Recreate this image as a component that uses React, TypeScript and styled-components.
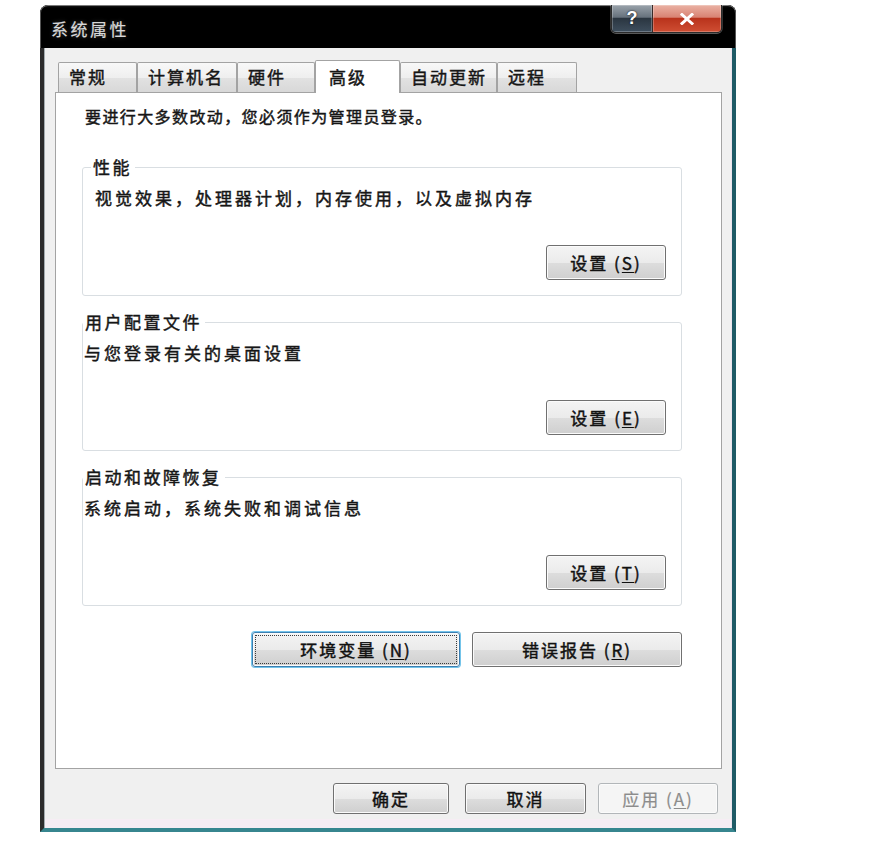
import React from "react";
import styled, { createGlobalStyle, css } from "styled-components";

const GlobalStyle = createGlobalStyle`
  html, body { margin: 0; padding: 0; background: #ffffff; }
  body {
    font-family: "Noto Sans CJK SC", "Noto Sans", "Liberation Sans", sans-serif;
    color: #161616;
    -webkit-text-stroke: 0.45px currentColor;
  }
  * { box-sizing: border-box; }
`;

const Page = styled.div`
  padding: 5px 0 0 40px;
`;

const Window = styled.div`
  width: 696px;
  display: flex;
  flex-direction: column;
  border-radius: 8px 8px 0 0;
  overflow: hidden;
  background: #000;
`;

const TitleBar = styled.div`
  height: 43px;
  display: flex;
  align-items: flex-start;
  justify-content: space-between;
  background: linear-gradient(#1c1c1c 0px, #000 3px, #000 100%);
  box-shadow: inset 0 1px 0 #7a7a7a, inset 1px 0 0 #555, inset -1px 0 0 #555;
  border-radius: 8px 8px 0 0;
`;

const Title = styled.div`
  margin: 13px 0 0 11px;
  font-size: 17px;
  line-height: 22px;
  letter-spacing: 2.5px;
  color: #d8d8d8;
  -webkit-text-stroke: 0.2px currentColor;
  text-shadow: 0 0 4px rgba(255, 255, 255, 0.25);
`;

const Caption = styled.div`
  display: flex;
  height: 28px;
  margin-right: 14px;
  border: 1px solid #2b2b2b;
  border-top: none;
  border-radius: 0 0 5px 5px;
  overflow: hidden;
  box-shadow: 0 1px 0 rgba(255, 255, 255, 0.35), 1px 0 0 rgba(255, 255, 255, 0.2),
    -1px 0 0 rgba(255, 255, 255, 0.2);
`;

const CaptionButton = styled.div<{ $w: number; $close?: boolean }>`
  width: ${(p) => p.$w}px;
  display: flex;
  align-items: center;
  justify-content: center;
  color: #fff;
  font-family: "Liberation Sans", sans-serif;
  font-weight: bold;
  font-size: 18px;
  -webkit-text-stroke: 0;
  text-shadow: 0 0 2px #000;
  background: linear-gradient(#9aa3ab 0%, #67727d 45%, #2b3641 50%, #3e4e5d 100%);
  box-shadow: inset 0 0 0 1px rgba(255, 255, 255, 0.25);
  ${(p) =>
    p.$close &&
    css`
      background: linear-gradient(#eab2a4 0%, #d98373 45%, #b9331c 50%, #cf4e33 100%);
      border-left: 1px solid #3a2a28;
    `}
`;

const ClientFrame = styled.div`
  display: flex;
  flex-direction: column;
  height: 784px;
  padding: 12px 10px 14px 11px;
  border-left: 4px solid #2c2c2c;
  border-right: 4px solid #1f5b66;
  border-bottom: 4px solid #37868f;
  background: linear-gradient(#f0f0f0 calc(100% - 9px), #f6edf4 calc(100% - 9px));
  box-shadow: inset 1px 0 0 #a4acb0, inset -1px 0 0 #ece3ee;
`;

const TabStrip = styled.div`
  display: flex;
  align-items: flex-end;
  height: 32px;
  padding-left: 3px;
`;

const Tab = styled.div<{ $w: number; $active?: boolean }>`
  width: ${(p) => p.$w}px;
  height: 30px;
  padding-left: 10px;
  border: 1px solid #a3a3a3;
  border-bottom: none;
  border-radius: 2px 2px 0 0;
  background: linear-gradient(#f8f8f8 0%, #efefef 50%, #e2e2e2 51%, #d8d8d8 100%);
  font-size: 17px;
  line-height: 28px;
  letter-spacing: 2px;
  white-space: nowrap;
  ${(p) =>
    p.$active &&
    css`
      position: relative;
      z-index: 1;
      height: 33px;
      margin-bottom: -1px;
      padding: 2px 0 0 13px;
      background: #ffffff;
    `}
`;

const Panel = styled.div`
  height: 677px;
  display: flex;
  flex-direction: column;
  padding: 13px 39px 0 26px;
  border: 1px solid #a3a3a3;
  background: #ffffff;
`;

const Notice = styled.div`
  margin-left: 3px;
  font-size: 16px;
  line-height: 20px;
  letter-spacing: 1.4px;
`;

const Group = styled.fieldset<{ $first?: boolean }>`
  margin: ${(p) => (p.$first ? 31 : 16)}px 0 0 0;
  padding: 0;
  min-width: 0;
  border: 1px solid #d9dee2;
  border-radius: 3px;
`;

const GroupLabel = styled.legend<{ $indent: number }>`
  margin-left: ${(p) => p.$indent}px;
  padding: 0 3px 0 2px;
  font-size: 17px;
  line-height: 20px;
  letter-spacing: 2.5px;
`;

const GroupBody = styled.div<{ $indent: number }>`
  display: flex;
  flex-direction: column;
  padding: 11px 15px 15px ${(p) => p.$indent}px;
`;

const GroupText = styled.div`
  font-size: 17px;
  line-height: 20px;
  letter-spacing: 3px;
  white-space: nowrap;
`;

const Button = styled.div<{ $w: number; $h?: number; $focus?: boolean; $disabled?: boolean }>`
  width: ${(p) => p.$w}px;
  height: ${(p) => p.$h ?? 35}px;
  display: flex;
  align-items: center;
  justify-content: center;
  border: 1px solid #707070;
  border-radius: 3px;
  background: linear-gradient(#f4f4f4 0%, #ebebeb 50%, #dddddd 51%, #cfcfcf 100%);
  box-shadow: inset 0 0 0 1px #fbfbfb;
  font-size: 17px;
  letter-spacing: 2px;
  color: #111;
  white-space: nowrap;
  ${(p) =>
    p.$focus &&
    css`
      border-color: #3c7fb1;
      box-shadow: 0 0 0 1px #74c4ea, inset 0 0 0 1px #fbfbfb;
      outline: 1px dotted #3a3a3a;
      outline-offset: -4px;
    `}
  ${(p) =>
    p.$disabled &&
    css`
      border-color: #b2b6b9;
      background: #f5f5f5;
      color: #8c8c8c;
      -webkit-text-stroke: 0.2px currentColor;
    `}
`;

const GroupButton = styled(Button)`
  align-self: flex-end;
  margin-top: 37px;
`;

const Accel = styled.span`
  text-decoration: underline;
  text-decoration-thickness: 1px;
  text-underline-offset: 2px;
`;

const ActionRow = styled.div`
  display: flex;
  justify-content: flex-end;
  gap: 12px;
  margin-top: 26px;
`;

const FooterRow = styled.div`
  display: flex;
  justify-content: flex-end;
  margin-top: 14px;
  padding-right: 4px;
`;

const FooterButton = styled(Button)<{ $gap: number }>`
  margin-left: ${(p) => p.$gap}px;
`;

const tabs = [
  { label: "常规", w: 79 },
  { label: "计算机名", w: 100 },
  { label: "硬件", w: 78 },
  { label: "高级", w: 85, active: true },
  { label: "自动更新", w: 97 },
  { label: "远程", w: 80 },
];

const groups = [
  { title: "性能", text: "视觉效果，处理器计划，内存使用，以及虚拟内存", key: "S", labelIndent: 8, bodyIndent: 12 },
  { title: "用户配置文件", text: "与您登录有关的桌面设置", key: "E", labelIndent: 0, bodyIndent: 1 },
  { title: "启动和故障恢复", text: "系统启动，系统失败和调试信息", key: "T", labelIndent: 0, bodyIndent: 1 },
];

export default function App() {
  return (
    <Page>
      <GlobalStyle />
      <Window>
        <TitleBar>
          <Title>系统属性</Title>
          <Caption>
            <CaptionButton $w={40}>?</CaptionButton>
            <CaptionButton $w={69} $close>
              <svg width="14" height="12" viewBox="0 0 14 12">
                <path d="M2 1.5 L12 10.5 M12 1.5 L2 10.5" stroke="#fff" strokeWidth="3" strokeLinecap="square" />
              </svg>
            </CaptionButton>
          </Caption>
        </TitleBar>
        <ClientFrame>
          <TabStrip>
            {tabs.map((t) => (
              <Tab key={t.label} $w={t.w} $active={t.active}>
                {t.label}
              </Tab>
            ))}
          </TabStrip>
          <Panel>
            <Notice>要进行大多数改动，您必须作为管理员登录。</Notice>
            {groups.map((g, i) => (
              <Group key={g.title} $first={i === 0}>
                <GroupLabel $indent={g.labelIndent}>{g.title}</GroupLabel>
                <GroupBody $indent={g.bodyIndent}>
                  <GroupText>{g.text}</GroupText>
                  <GroupButton $w={120}>
                    设置 (<Accel>{g.key}</Accel>)
                  </GroupButton>
                </GroupBody>
              </Group>
            ))}
            <ActionRow>
              <Button $w={208} $focus>
                环境变量 (<Accel>N</Accel>)
              </Button>
              <Button $w={210}>
                错误报告 (<Accel>R</Accel>)
              </Button>
            </ActionRow>
          </Panel>
          <FooterRow>
            <FooterButton $w={116} $h={31} $gap={0}>
              确定
            </FooterButton>
            <FooterButton $w={121} $h={31} $gap={16}>
              取消
            </FooterButton>
            <FooterButton $w={120} $h={31} $gap={12} $disabled>
              应用 (<Accel>A</Accel>)
            </FooterButton>
          </FooterRow>
        </ClientFrame>
      </Window>
    </Page>
  );
}
